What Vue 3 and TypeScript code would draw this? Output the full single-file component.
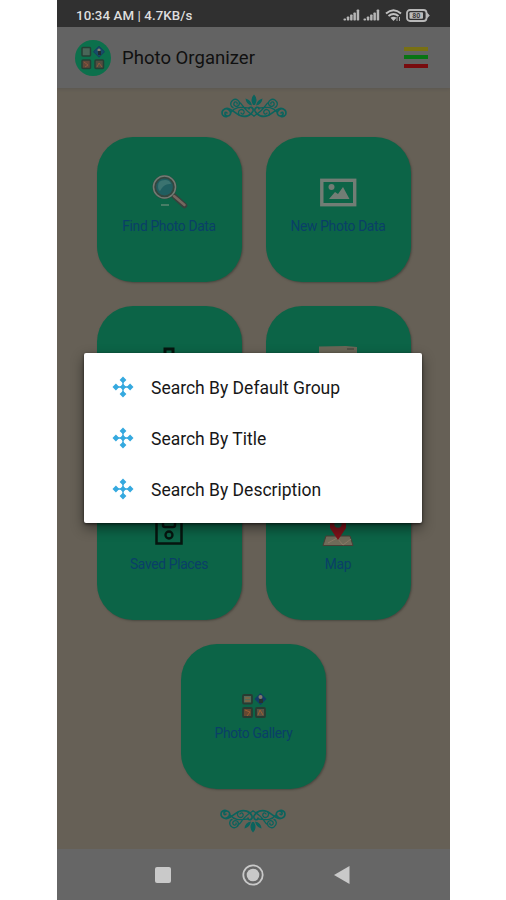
<script setup lang="ts">
interface Tile {
  label: string
  icon: 'search' | 'photo' | 'pin' | 'folder' | 'saved' | 'map' | 'gallery'
}

const tiles: Tile[] = [
  { label: 'Find Photo Data', icon: 'search' },
  { label: 'New Photo Data', icon: 'photo' },
  { label: '', icon: 'pin' },
  { label: '', icon: 'folder' },
  { label: 'Saved Places', icon: 'saved' },
  { label: 'Map', icon: 'map' },
  { label: 'Photo Gallery', icon: 'gallery' },
]

const options: string[] = ['Search By Default Group', 'Search By Title', 'Search By Description']
const bars: number[] = [2, 4, 6, 8, 11]
</script>

<template>
  <div class="stage">
    <div class="phone">
      <div class="status">
        <span class="clock">10:34 AM | 4.7KB/s</span>
        <div class="indicators">
          <svg v-for="n in 2" :key="n" class="signal" width="17" height="12" viewBox="0 0 17 12">
            <rect v-for="(h, i) in bars" :key="i" :x="0.5 + i * 3.3" :y="11.5 - h" width="2.5" :height="h" rx=".7" fill="#b5b5b5" />
          </svg>
          <svg class="wifi" width="17" height="13" viewBox="0 0 17 13">
            <path d="M1 4.5Q8.5-2 16 4.5M3.5 7Q8.5 3 13.5 7" fill="none" stroke="#c0c0c0" stroke-width="2" />
            <path d="M5.5 8.8Q8.5 6.5 11.5 8.8L8.5 12Z" fill="#c0c0c0" />
            <path d="M12 8v4M14.5 8v4" stroke="#aaa" stroke-width="1" />
          </svg>
          <svg class="battery" width="24" height="13" viewBox="0 0 24 13">
            <rect x="1" y="1" width="19.5" height="11" rx="3" fill="none" stroke="#b8b8b8" stroke-width="1.8" />
            <path d="M20.5 3L23.8 6.5L20.5 10Z" fill="#b8b8b8" />
            <rect x="3.5" y="3.2" width="13.5" height="6.6" rx="1" fill="#bbb" />
            <text x="10.2" y="9" text-anchor="middle" class="charge">80</text>
          </svg>
        </div>
      </div>

      <header class="header">
        <span class="logo">
          <svg width="24" height="24" viewBox="0 0 24 24">
            <g stroke="#263f34" stroke-width="1.5">
              <rect x="1" y="1.5" width="8.5" height="8.5" rx="1" fill="#496658" />
              <rect x="1" y="14" width="8.5" height="8.5" rx="1" fill="#62483a" />
              <rect x="14" y="14" width="8.5" height="8.5" rx="1" fill="#524d40" />
            </g>
            <path d="M18 .3L23.5 5.7L18 11.2L12.5 5.7Z" fill="#164c68" stroke="#173e60" />
            <path d="M3 16l4 3-3 2M16 21l2-4 3 4" stroke="#8f593d" fill="none" />
            <circle cx="18" cy="4" r="1.6" fill="#8d806e" />
            <path d="M17 5h3v4h-3z" fill="#222d30" />
          </svg>
        </span>
        <h1 class="title">Photo Organizer</h1>
        <span class="menu"><i class="yellow" /><i class="green" /><i class="red" /></span>
      </header>

      <main class="content">
        <svg class="flourish" width="66" height="25" viewBox="0 0 66 25">
          <g id="ornament">
            <g id="scroll" fill="none" stroke="#0b635d" stroke-width="1.6" stroke-linecap="round">
              <path d="M6 19C4 17 3 20 5 21.5C8 23 11 20 9 17C6 13 1 15 1 19C1 22 4 23 6 22.5M2 16C8 11 13 19 19 21.5C24 23.5 30 22 32 17C33 13 28 12 28 15" />
              <path d="M16 10C17 8 14 7 13 9C12 12 16 13.5 18 11C20 7 15 4 12 6C8 9 10 13 12 13.5M18 8C22 10 21 15 33 22M10 18C16 11 22 14 28 14M18 21C16 16 21 14 23 17C24 20 21 21 20 19" stroke-width="1.3" />
            </g>
            <use href="#scroll" transform="translate(66 0) scale(-1 1)" />
            <path d="M33 .5Q37.5 5 34 11H32Q28.5 5 33 .5M24.5 4.5Q30 6 31 11.5Q25 10.5 24.5 4.5M41.5 4.5Q36 6 35 11.5Q41 10.5 41.5 4.5" fill="#0b635d" />
          </g>
        </svg>

        <div class="tiles">
          <div v-for="tile in tiles" :key="tile.icon" class="tile" :class="tile.icon">
            <svg v-if="tile.icon === 'search'" class="icon" width="38" height="38" viewBox="0 0 38 38">
              <path d="M11 32h8" stroke="#487d66" stroke-width="2" />
              <path d="M24 23L34.5 32.5" stroke="#39413d" stroke-width="5.5" stroke-linecap="round" />
              <path d="M24 23L34.5 32" stroke="#776860" stroke-width="2.5" stroke-linecap="round" />
              <circle cx="14.5" cy="14" r="10.2" fill="#205e60" stroke="#35463f" stroke-width="3.6" />
              <circle cx="14.5" cy="14" r="11" fill="none" stroke="#737b74" stroke-width="1.5" />
              <path d="M8 13Q8 7 15 7Q20 7 21 11Q14 10 10 18Q8 17 8 13" fill="#3b7370" />
            </svg>
            <svg v-else-if="tile.icon === 'photo'" class="icon" width="38" height="38" viewBox="0 0 38 38">
              <rect x="2.8" y="7.3" width="32.9" height="24.4" fill="none" stroke="#727d75" stroke-width="3.4" />
              <circle cx="12.5" cy="14" r="3" fill="#727d75" />
              <path d="M10 26L16 19L19 21L24 14L30.5 26Z" fill="#727d75" />
            </svg>
            <svg v-else-if="tile.icon === 'gallery'" class="icon" width="26" height="26" viewBox="0 0 26 26">
              <g stroke="#283b32" stroke-width="1.8">
                <rect x="2" y="2" width="9" height="8.5" rx="1" fill="#526957" />
                <rect x="2" y="15" width="9" height="9" rx="1" fill="#644832" />
                <rect x="15" y="15" width="9" height="9" rx="1" fill="#5a5344" />
              </g>
              <path d="M19.5 0L25.5 6L19.5 12L13.5 6Z" fill="#123c67" />
              <circle cx="19.5" cy="4" r="2" fill="#827768" /><path d="M18 6h4v4h-4z" fill="#26312f" />
              <path d="M4 5h5M4 8h5M4 17l5 2-3 4M17 22l2-5 3 5" stroke="#9a5f33" fill="none" />
            </svg>
            <svg v-else-if="tile.icon === 'folder'" class="icon" width="38" height="38" viewBox="0 0 38 38">
              <path d="M0 4.5L27 4L38 5V34H0Z" fill="#6a6657" /><path d="M28 7h7" stroke="#4b4c40" stroke-width="1.5" />
            </svg>
            <svg v-else-if="tile.icon === 'map'" class="icon" width="38" height="38" viewBox="0 0 38 38">
              <path d="M7 25L31 25L34 34.5H4Z" fill="#706b59" stroke="#493e36" />
              <path d="M9 32L18 27L24 34L32 28" stroke="#8a7966" fill="none" />
              <path d="M19 29L11 17V8H27V17Z" fill="#7d1219" /><circle cx="19" cy="13" r="3.7" fill="#155440" />
            </svg>
            <svg v-else-if="tile.icon === 'pin'" class="icon" width="38" height="38" viewBox="0 0 38 38">
              <path d="M15 14V7H23V14" fill="none" stroke="#06150f" stroke-width="3" />
            </svg>
            <svg v-else class="icon" width="38" height="38" viewBox="0 0 38 38">
              <path d="M6.5 8V32.5H31.5V8M13 8V14Q13 16 15 16H23Q25 16 25 14V8" fill="none" stroke="#06150f" stroke-width="2.5" />
              <circle cx="19" cy="24" r="3.5" fill="none" stroke="#06150f" stroke-width="2.3" />
            </svg>
            <span class="label">{{ tile.label }}</span>
          </div>
        </div>

        <svg class="flourish bottom" width="66" height="25" viewBox="0 0 66 25">
          <use href="#ornament" transform="translate(0 25) scale(1 -1)" />
        </svg>
      </main>

      <nav class="nav">
        <svg width="22" height="22" viewBox="0 0 22 22"><rect x="3" y="3" width="16" height="16" rx="2" fill="#c9c9c9" /></svg>
        <svg width="22" height="22" viewBox="0 0 22 22"><circle cx="11" cy="11" r="9.7" fill="none" stroke="#c9c9c9" stroke-width="1.8" /><circle cx="11" cy="11" r="6.3" fill="#c9c9c9" /></svg>
        <svg width="22" height="22" viewBox="0 0 22 22"><path d="M3 11L18.5 2V20Z" fill="#c9c9c9" /></svg>
      </nav>

      <div class="dialog" role="dialog">
        <div v-for="option in options" :key="option" class="option">
          <svg class="diamonds" width="22" height="22" viewBox="0 0 22 22">
            <path d="M11 .5L14.4 3.9L11 7.3L7.6 3.9ZM11 7.8L14.2 11L11 14.2L7.8 11ZM11 14.7L14.4 18.1L11 21.5L7.6 18.1ZM3.9 7.6L7.3 11L3.9 14.4L.5 11ZM18.1 7.6L21.5 11L18.1 14.4L14.7 11Z" fill="#35a9df" />
            <path d="M11 5V17M5 11H17" stroke="#35a9df" stroke-width="1.3" />
          </svg>
          <span>{{ option }}</span>
        </div>
      </div>
    </div>
  </div>
</template>

<style>
body { margin: 0; background: #fff; }
</style>

<style scoped>
.stage { display: flex; width: 506px; height: 900px; overflow: hidden; background: #fff; font-family: Roboto, "Liberation Sans", sans-serif; }
.phone { position: relative; display: flex; flex-direction: column; width: 393px; height: 900px; margin-left: 57px; overflow: hidden; background: #666056; }
.status { display: flex; box-sizing: border-box; height: 27px; padding: 5px 20px 0 19px; align-items: center; justify-content: space-between; background: #303030; color: #dedede; z-index: 2; }
.clock { font-size: 13.3px; font-weight: 500; letter-spacing: .08px; line-height: 20px; }
.indicators { display: flex; align-items: center; gap: 3px; margin-top: -2px; }
.wifi { margin-left: 2px; }
.battery { margin-left: 1px; }
.charge { font: bold 7px Roboto, sans-serif; fill: #383838; }
.header { display: flex; align-items: center; box-sizing: border-box; height: 61px; padding: 0 22px 0 18px; background: #636363; box-shadow: 0 1px 3px #5b5750; z-index: 1; }
.logo { display: flex; align-items: center; justify-content: center; width: 36px; height: 36px; border-radius: 50%; background: #0c704c; }
.title { margin: 0 0 0 11px; color: #101010; font-size: 18.5px; font-weight: 400; letter-spacing: .03px; }
.menu { display: flex; flex-direction: column; gap: 4.5px; margin: -1px 0 0 auto; }
.menu i { display: block; width: 24px; height: 4px; }
.yellow { background: #787014; }
.green { background: #087414; }
.red { background: #780b0e; }
.content { display: flex; flex-direction: column; align-items: center; height: 761px; }
.flourish { flex: none; margin-top: 6px; }
.bottom { margin: 19px 2px 0 0; }
.tiles { display: grid; grid-template-columns: 145px 145px; gap: 24px; margin-top: 18px; }
.tile { display: flex; flex-direction: column; align-items: center; box-sizing: border-box; width: 145px; height: 145px; padding-top: 36px; border-radius: 36px; background: #0c6447; box-shadow: 1px 1px 2px #4a4840; }
.gallery { grid-column: 1 / -1; justify-self: center; padding-top: 49px; }
.label { margin-top: 6px; color: #0a3f68; font-size: 13.8px; letter-spacing: -.32px; line-height: 18px; }
.gallery .label { margin-top: 5px; }
.nav { display: flex; align-items: center; justify-content: center; gap: 67.5px; height: 51px; padding-right: 2px; background: #666; }
.dialog { position: absolute; top: 353px; left: 27px; z-index: 3; display: flex; flex-direction: column; box-sizing: border-box; width: 338px; height: 170px; padding: 9px 28px; border-radius: 2px; background: #fff; box-shadow: 0 5px 13px #0007, 0 1px 3px #0009; }
.option { display: flex; align-items: center; height: 50.7px; gap: 17px; color: #171717; font-size: 17.5px; }
.option span { padding-top: 2px; }
</style>
